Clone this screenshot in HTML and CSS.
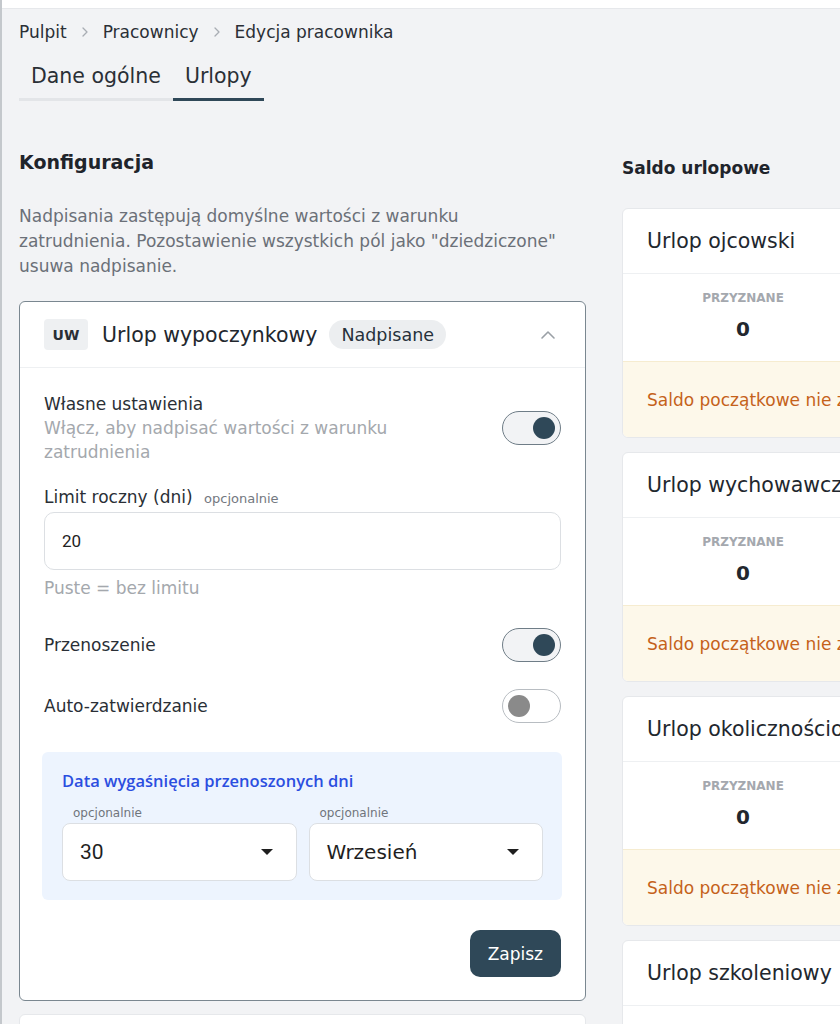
FILE: index.html
```html
<!DOCTYPE html>
<html lang="pl">
<head>
<meta charset="utf-8">
<title>Edycja pracownika</title>
<link rel="stylesheet" href="styles.css">
</head>
<body>
<div class="topbar"></div>
<main class="page">
  <nav class="crumbs">
    <span>Pulpit</span>
    <svg class="sep" width="8" height="12" viewBox="0 0 8 12"><path d="M2 2 L6 6 L2 10" fill="none" stroke="#a8adb3" stroke-width="1.3" stroke-linecap="round" stroke-linejoin="round"/></svg>
    <span>Pracownicy</span>
    <svg class="sep" width="8" height="12" viewBox="0 0 8 12"><path d="M2 2 L6 6 L2 10" fill="none" stroke="#a8adb3" stroke-width="1.3" stroke-linecap="round" stroke-linejoin="round"/></svg>
    <span>Edycja pracownika</span>
  </nav>
  <div class="tabs">
    <div class="tab">Dane ogólne</div>
    <div class="tab active">Urlopy</div>
  </div>

  <div class="columns">
    <section class="left">
      <h2 class="h2">Konfiguracja</h2>
      <p class="intro">Nadpisania zastępują domyślne wartości z warunku zatrudnienia. Pozostawienie wszystkich pól jako "dziedziczone" usuwa nadpisanie.</p>

      <div class="card config">
        <div class="card-head">
          <span class="code">UW</span>
          <span class="title">Urlop wypoczynkowy</span>
          <span class="pill">Nadpisane</span>
          <svg class="chev" width="16" height="10" viewBox="0 0 16 10"><path d="M2 8 L8 2 L14 8" fill="none" stroke="#9aa0a6" stroke-width="1.6" stroke-linecap="round" stroke-linejoin="round"/></svg>
        </div>
        <div class="card-body">
          <div class="row first">
            <div>
              <div class="label">Własne ustawienia</div>
              <div class="desc">Włącz, aby nadpisać wartości z warunku zatrudnienia</div>
            </div>
            <span class="toggle on"><span class="knob"></span></span>
          </div>

          <div class="field">
            <div class="label">Limit roczny (dni) <span class="opt">opcjonalnie</span></div>
            <div class="input">20</div>
            <div class="hint">Puste = bez limitu</div>
          </div>

          <div class="row simple">
            <div class="label">Przenoszenie</div>
            <span class="toggle on"><span class="knob"></span></span>
          </div>
          <div class="row simple">
            <div class="label">Auto-zatwierdzanie</div>
            <span class="toggle off"><span class="knob"></span></span>
          </div>

          <div class="expiry">
            <div class="expiry-title">Data wygaśnięcia przenoszonych dni</div>
            <div class="selects">
              <div class="sel-wrap">
                <div class="sel-label">opcjonalnie</div>
                <div class="select"><span class="num">30</span><span class="caret"></span></div>
              </div>
              <div class="sel-wrap">
                <div class="sel-label">opcjonalnie</div>
                <div class="select"><span>Wrzesień</span><span class="caret"></span></div>
              </div>
            </div>
          </div>

          <div class="actions"><button class="btn">Zapisz</button></div>
        </div>
      </div>
      <div class="card next"></div>
    </section>

    <section class="right">
      <h2 class="h2 saldo">Saldo urlopowe</h2>
      <div class="bal">
        <div class="bal-head">Urlop ojcowski</div>
        <div class="bal-stats"><div class="stat"><div class="stat-l">PRZYZNANE</div><div class="stat-v">0</div></div></div>
        <div class="bal-warn">Saldo początkowe nie zostało ustawione</div>
      </div>
      <div class="bal">
        <div class="bal-head">Urlop wychowawczy</div>
        <div class="bal-stats"><div class="stat"><div class="stat-l">PRZYZNANE</div><div class="stat-v">0</div></div></div>
        <div class="bal-warn">Saldo początkowe nie zostało ustawione</div>
      </div>
      <div class="bal">
        <div class="bal-head">Urlop okolicznościowy</div>
        <div class="bal-stats"><div class="stat"><div class="stat-l">PRZYZNANE</div><div class="stat-v">0</div></div></div>
        <div class="bal-warn">Saldo początkowe nie zostało ustawione</div>
      </div>
      <div class="bal">
        <div class="bal-head">Urlop szkoleniowy</div>
        <div class="bal-stats"><div class="stat"><div class="stat-l">PRZYZNANE</div><div class="stat-v">0</div></div></div>
      </div>
    </section>
  </div>
</main>
</body>
</html>
```

FILE: styles.css
```css
* { box-sizing: border-box; }
html, body { margin: 0; padding: 0; }
body {
  background: #f2f3f5;
  font-family: "DejaVu Sans", "Open Sans", sans-serif;
  color: #222831;
  width: 840px;
  height: 1024px;
  overflow: hidden;
  border-left: 2px solid #c4c8cc;
}
.topbar {
  height: 9px;
  background: #ffffff;
  border-bottom: 1px solid #e6e8eb;
}
.page {
  padding: 11px 0 0 17px;
  width: 1400px;
}
.crumbs {
  display: flex;
  align-items: center;
  gap: 14px;
  font-size: 17px;
  line-height: 24px;
  color: #2a2f36;
}
.tabs {
  display: inline-flex;
  margin-top: 14px;
  border-bottom: 3px solid #e3e5e8;
}
.tab {
  padding: 4px 12px 8px;
  font-size: 20.5px;
  line-height: 28px;
  color: #2a2f36;
  margin-bottom: -3px;
  border-bottom: 3px solid transparent;
}
.tab.active { border-bottom-color: #2f4858; }

.columns {
  display: grid;
  grid-template-columns: 567px 720px;
  column-gap: 36px;
  margin-top: 48px;
}
.h2 {
  margin: 0;
  font-size: 19px;
  line-height: 26px;
  font-weight: 700;
  color: #1f242b;
}
.h2.saldo { margin-top: 6px; font-size: 17px; }
.intro {
  margin: 29px 0 22px;
  max-width: 546px;
  font-size: 17px;
  line-height: 25px;
  color: #6b7078;
}
.card {
  background: #fff;
  border: 1px solid #7a8790;
  border-radius: 6px;
}
.card.next { border-color: #e6e8eb; height: 30px; margin-top: 13px; }
.card-head {
  display: flex;
  align-items: center;
  height: 66px;
  padding: 0 24px;
  border-bottom: 1px solid #eef0f2;
}
.code {
  background: #eef0f2;
  border-radius: 4px;
  font-size: 14px;
  font-weight: 700;
  width: 44px;
  height: 31px;
  display: flex;
  align-items: center;
  justify-content: center;
  color: #2a2f36;
}
.title { font-size: 20.5px; margin-left: 14px; color: #22272e; }
.pill {
  margin-left: 12px;
  background: #eceef0;
  border-radius: 15px;
  padding: 0 12px;
  height: 29px;
  display: flex;
  align-items: center;
  font-size: 17.5px;
  color: #26313b;
}
.chev { margin-left: auto; margin-right: 5px; }
.card-body { padding: 24px 24px 23px; }
.row {
  display: flex;
  align-items: center;
  justify-content: space-between;
}
.row.first .desc { width: 380px; }
.label { font-size: 17px; line-height: 24px; color: #2a2f36; }
.desc { font-size: 17px; line-height: 24px; color: #a4a8ad; }
.opt { font-size: 13px; color: #737880; margin-left: 6px; }
.toggle {
  flex: none;
  width: 59px;
  height: 34px;
  border: 1.5px solid #6f7d87;
  border-radius: 17px;
  display: flex;
  align-items: center;
  padding: 0 5px;
}
.toggle.on { background: #f2f3f5; justify-content: flex-end; }
.toggle.off { background: #fff; border-color: #b8bdc2; justify-content: flex-start; }
.knob { width: 22px; height: 22px; border-radius: 50%; background: #2f4858; }
.toggle.off .knob { background: #8a8a8a; }
.field { margin-top: 21px; }
.input {
  margin-top: 1px;
  height: 58px;
  border: 1px solid #dcdfe3;
  border-radius: 10px;
  display: flex;
  align-items: center;
  padding: 0 17px;
  font-size: 17px;
  color: #222;
  font-family: "Roboto", sans-serif;
}
.hint { margin-top: 6px; font-size: 17px; line-height: 24px; color: #a4a8ad; }
.row.simple { margin-top: 28px; }
.row.simple + .row.simple { margin-top: 27px; }
.expiry {
  margin: 29px -1px 0 -2px;
  background: #edf4fe;
  border-radius: 6px;
  padding: 16px 19px 19px 20px;
}
.expiry-title {
  font-family: "Open Sans", "DejaVu Sans", sans-serif;
  font-weight: 600;
  font-size: 16.5px;
  line-height: 26px;
  color: #2b4ee0;
}
.selects { display: grid; grid-template-columns: 1fr 1fr; gap: 12px; margin-top: 11px; }
.sel-label { font-size: 12px; line-height: 16px; color: #70757c; padding-left: 11px; }
.select {
  margin-top: 2px;
  height: 58px;
  background: #fff;
  border: 1px solid #dcdfe3;
  border-radius: 8px;
  display: flex;
  align-items: center;
  justify-content: space-between;
  padding: 0 23px 0 17px;
  font-size: 20px;
  color: #1f1f1f;
}
.select .num { font-family: "Roboto", sans-serif; font-size: 21px; }
.caret {
  width: 0; height: 0;
  border-left: 6px solid transparent;
  border-right: 6px solid transparent;
  border-top: 6px solid #1f1f1f;
}
.actions { display: flex; justify-content: flex-end; margin-top: 30px; }
.btn {
  background: #2f4858;
  color: #fff;
  border: none;
  border-radius: 10px;
  height: 47px;
  padding: 0 18px;
  font-family: inherit;
  font-size: 17px;
}

.bal {
  background: #fff;
  border: 1px solid #e6e8eb;
  border-radius: 6px;
  margin-top: 14px;
  overflow: hidden;
}
.h2.saldo + .bal { margin-top: 27px; }
.bal-head {
  height: 65px;
  display: flex;
  align-items: center;
  padding: 0 24px;
  font-size: 20.5px;
  color: #22272e;
  border-bottom: 1px solid #eef0f2;
}
.bal-stats { display: grid; grid-template-columns: repeat(3, 240px); height: 87px; }
.stat { text-align: center; padding-top: 16px; }
.stat-l { font-size: 12px; font-weight: 700; color: #a4a8ae; line-height: 16px; }
.stat-v { font-size: 20px; font-weight: 700; color: #22272e; margin-top: 11px; line-height: 24px; }
.bal-warn {
  background: #fdf8ea;
  border-top: 1px solid #f6ecd0;
  height: 76px;
  display: flex;
  align-items: center;
  padding: 0 24px;
  font-size: 17px;
  color: #c5621a;
}
```
